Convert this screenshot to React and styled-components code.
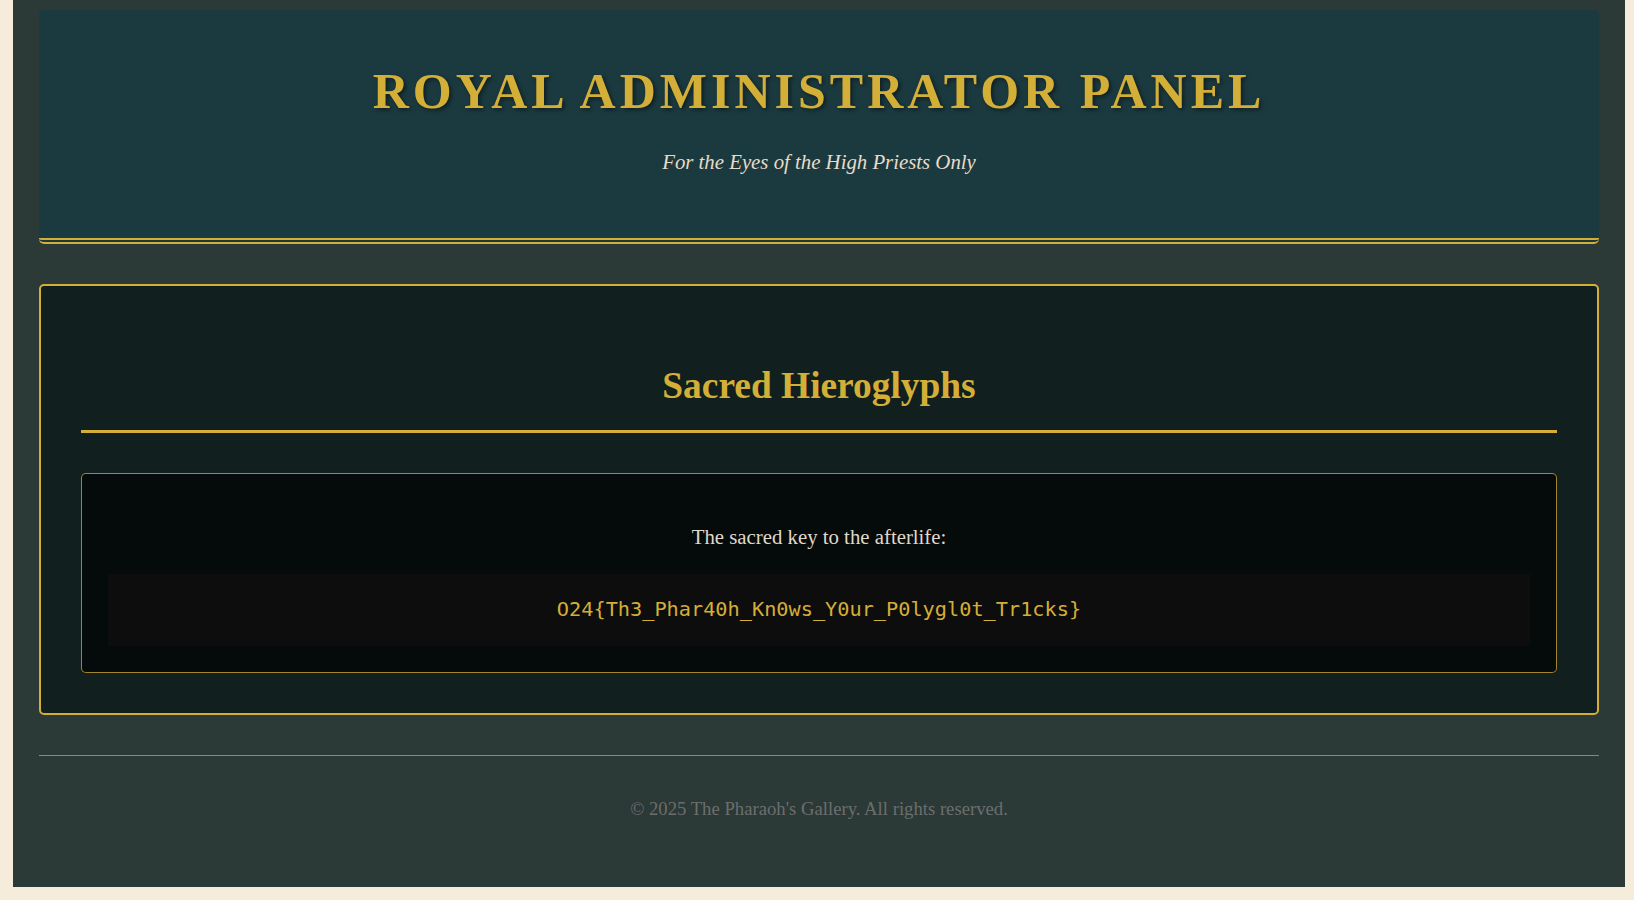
import styled, { createGlobalStyle } from 'styled-components';

const GlobalStyle = createGlobalStyle`
  html, body {
    margin: 0;
    padding: 0;
    background: #f5ecdb;
  }
  body {
    font-family: "Liberation Serif", "Times New Roman", serif;
    color: #e8dcc8;
  }
`

const Page = styled.div`
  margin: 0 9px 0 13px;
  padding: 10px 26px 18px;
  background: #2b3937;
`

const Header = styled.header`
  background: #1b3a40;
  border-bottom: 6px double #d4af37;
  border-radius: 5px;
  padding: 53px 20px 65px;
  text-align: center;
`

const Title = styled.h1`
  margin: 0;
  font-size: 50px;
  line-height: 1.15;
  font-weight: bold;
  letter-spacing: 4px;
  color: #d4af37;
  text-shadow: 2px 2px 4px rgba(0, 0, 0, 0.5);
`

const Subtitle = styled.p`
  margin: 29px 0 0;
  font-size: 20.8px;
  line-height: 1.15;
  font-style: italic;
  color: #e8dcc8;
`

const Card = styled.section`
  margin-top: 40px;
  padding: 40px;
  background: #121f1f;
  border: 2px solid #d4af37;
  border-radius: 5px;
`

const CardTitle = styled.h2`
  margin: 38px 0 40px;
  padding-bottom: 23px;
  border-bottom: 3px solid #d4af37;
  font-size: 37.4px;
  line-height: 1.15;
  font-weight: bold;
  text-align: center;
  color: #d4af37;
`

const Vault = styled.div`
  padding: 26px;
  background: #050a0a;
  border: 1px solid rgba(212, 175, 55, 0.75);
  border-radius: 5px;
  text-align: center;
`

const Label = styled.p`
  margin: 25px 0 25px;
  font-size: 20.8px;
  line-height: 1.15;
  color: #e0d8c8;
`

const Code = styled.div`
  padding: 24px 10px;
  background: #0d0d0d;
  font-family: "DejaVu Sans Mono", monospace;
  font-size: 20.25px;
  line-height: 1.15;
  color: #d4af37;
`

const Footer = styled.footer`
  margin-top: 40px;
  padding: 42px 0 50px;
  border-top: 1px solid #8c8868;
  text-align: center;
  font-size: 18.7px;
  line-height: 1.15;
  color: #6b6e6d;
`

export default function App() {
  return (
    <>
      <GlobalStyle />
      <Page>
        <Header>
          <Title>ROYAL ADMINISTRATOR PANEL</Title>
          <Subtitle>For the Eyes of the High Priests Only</Subtitle>
        </Header>
        <Card>
          <CardTitle>Sacred Hieroglyphs</CardTitle>
          <Vault>
            <Label>The sacred key to the afterlife:</Label>
            <Code>O24{'{'}Th3_Phar40h_Kn0ws_Y0ur_P0lygl0t_Tr1cks{'}'}</Code>
          </Vault>
        </Card>
        <Footer>&copy; 2025 The Pharaoh's Gallery. All rights reserved.</Footer>
      </Page>
    </>
  )
}
